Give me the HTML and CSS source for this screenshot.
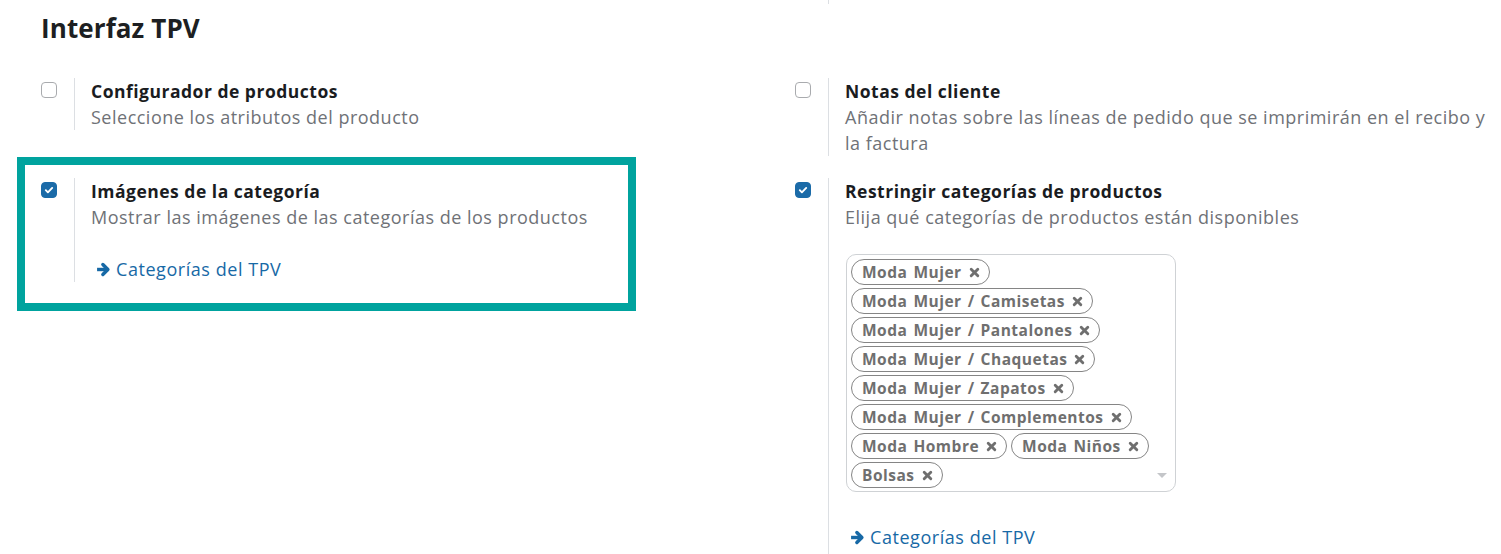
FILE: index.html
```html
<!DOCTYPE html>
<html lang="es">
<head>
<meta charset="utf-8">
<title>Interfaz TPV</title>
<link rel="stylesheet" href="styles.css">
</head>
<body>
<div class="page">
  <h2 class="heading">Interfaz TPV</h2>
  <div class="grid">
    <div class="setting">
      <div class="pane-left"><span class="cb"></span></div>
      <div class="pane-right">
        <div class="s-title">Configurador de productos</div>
        <div class="s-desc">Seleccione los atributos del producto</div>
      </div>
    </div>
    <div class="setting">
      <div class="pane-left"><span class="cb"></span></div>
      <div class="pane-right">
        <div class="s-title">Notas del cliente</div>
        <div class="s-desc">Añadir notas sobre las líneas de pedido que se imprimirán en el recibo y la factura</div>
      </div>
    </div>
    <div class="setting highlighted">
      <div class="pane-left"><span class="cb checked"><svg viewBox="0 0 16 16" width="16" height="16"><path d="M4.8 8.2l2.1 2.1 4.3-4.4" fill="none" stroke="#fff" stroke-width="1.9" stroke-linecap="round" stroke-linejoin="round"/></svg></span></div>
      <div class="pane-right">
        <div class="s-title">Imágenes de la categoría</div>
        <div class="s-desc">Mostrar las imágenes de las categorías de los productos</div>
        <a class="s-link link-a" href="#"><svg class="arrow" viewBox="0 0 14 14" width="15" height="15"><path d="M1 7H10.5" stroke="#1769a6" stroke-width="3.2" fill="none"/><path d="M6.4 2.3L11.1 7L6.4 11.7" stroke="#1769a6" stroke-width="3.2" fill="none" stroke-linecap="round" stroke-linejoin="round"/></svg>Categorías del TPV</a>
      </div>
    </div>
    <div class="setting tall">
      <div class="pane-left"><span class="cb checked"><svg viewBox="0 0 16 16" width="16" height="16"><path d="M4.8 8.2l2.1 2.1 4.3-4.4" fill="none" stroke="#fff" stroke-width="1.9" stroke-linecap="round" stroke-linejoin="round"/></svg></span></div>
      <div class="pane-right">
        <div class="s-title">Restringir categorías de productos</div>
        <div class="s-desc">Elija qué categorías de productos están disponibles</div>
        <div class="tagbox">
          <span class="tag">Moda Mujer<svg class="x" viewBox="0 0 10 10" width="11" height="11"><path d="M2 2L8 8M8 2L2 8" stroke="#6f6f6f" stroke-width="2.6" stroke-linecap="round"/></svg></span>
          <span class="tag">Moda Mujer / Camisetas<svg class="x" viewBox="0 0 10 10" width="11" height="11"><path d="M2 2L8 8M8 2L2 8" stroke="#6f6f6f" stroke-width="2.6" stroke-linecap="round"/></svg></span>
          <span class="tag">Moda Mujer / Pantalones<svg class="x" viewBox="0 0 10 10" width="11" height="11"><path d="M2 2L8 8M8 2L2 8" stroke="#6f6f6f" stroke-width="2.6" stroke-linecap="round"/></svg></span>
          <span class="tag">Moda Mujer / Chaquetas<svg class="x" viewBox="0 0 10 10" width="11" height="11"><path d="M2 2L8 8M8 2L2 8" stroke="#6f6f6f" stroke-width="2.6" stroke-linecap="round"/></svg></span>
          <span class="tag">Moda Mujer / Zapatos<svg class="x" viewBox="0 0 10 10" width="11" height="11"><path d="M2 2L8 8M8 2L2 8" stroke="#6f6f6f" stroke-width="2.6" stroke-linecap="round"/></svg></span>
          <span class="tag">Moda Mujer / Complementos<svg class="x" viewBox="0 0 10 10" width="11" height="11"><path d="M2 2L8 8M8 2L2 8" stroke="#6f6f6f" stroke-width="2.6" stroke-linecap="round"/></svg></span>
          <span class="tag">Moda Hombre<svg class="x" viewBox="0 0 10 10" width="11" height="11"><path d="M2 2L8 8M8 2L2 8" stroke="#6f6f6f" stroke-width="2.6" stroke-linecap="round"/></svg></span><span class="tag">Moda Niños<svg class="x" viewBox="0 0 10 10" width="11" height="11"><path d="M2 2L8 8M8 2L2 8" stroke="#6f6f6f" stroke-width="2.6" stroke-linecap="round"/></svg></span>
          <span class="tag">Bolsas<svg class="x" viewBox="0 0 10 10" width="11" height="11"><path d="M2 2L8 8M8 2L2 8" stroke="#6f6f6f" stroke-width="2.6" stroke-linecap="round"/></svg></span>
          <span class="caret"></span>
        </div>
        <a class="s-link link-b" href="#"><svg class="arrow" viewBox="0 0 14 14" width="15" height="15"><path d="M1 7H10.5" stroke="#1769a6" stroke-width="3.2" fill="none"/><path d="M6.4 2.3L11.1 7L6.4 11.7" stroke="#1769a6" stroke-width="3.2" fill="none" stroke-linecap="round" stroke-linejoin="round"/></svg>Categorías del TPV</a>
      </div>
    </div>
  </div>
</div>
</body>
</html>
```

FILE: styles.css
```css
html, body {
  margin: 0;
  padding: 0;
  background: #ffffff;
  overflow: hidden;
}
body {
  font-family: "Open Sans", "Noto Sans", sans-serif;
  color: #1f2328;
  height: 554px;
}
.page {
  position: relative;
  padding-left: 41px;
}
.page::before {
  content: "";
  position: absolute;
  left: 828px;
  top: 0;
  width: 1px;
  height: 4px;
  background: #dcdfe3;
}
.heading {
  margin: 0;
  padding-top: 10px;
  height: 77px;
  box-sizing: border-box;
  font-size: 26px;
  line-height: 36px;
  font-weight: 700;
  color: #1d1f22;
  letter-spacing: 0.1px;
}
.grid {
  display: grid;
  grid-template-columns: 754px 1fr;
  row-gap: 22px;
  align-items: start;
  padding-top: 1px;
}
.setting {
  display: flex;
  position: relative;
}
.setting.highlighted::before {
  content: "";
  position: absolute;
  left: -24px;
  top: -21px;
  width: 619px;
  height: 154px;
  box-sizing: border-box;
  border: 8px solid #00a39e;
  pointer-events: none;
}
.pane-left {
  width: 33px;
  flex: none;
  padding-top: 4px;
}
.pane-right {
  border-left: 1px solid #dcdfe3;
  padding-left: 16px;
  padding-right: 10px;
  flex: 1;
  min-width: 0;
}
.setting.tall .pane-right {
  min-height: 380px;
}
.cb {
  display: block;
  width: 16px;
  height: 16px;
  box-sizing: border-box;
  border: 1px solid #a9abae;
  border-radius: 4px;
  background: #fff;
}
.cb.checked {
  background: #1b6ba8;
  border-color: #1b6ba8;
  position: relative;
}
.cb.checked svg {
  position: absolute;
  left: -1px;
  top: -1px;
}
.s-title {
  font-size: 17.5px;
  line-height: 26px;
  font-weight: 700;
  letter-spacing: 0.5px;
  color: #1a1c1f;
}
.s-desc {
  font-size: 18px;
  line-height: 26px;
  letter-spacing: 0.5px;
  color: #6f7277;
}
.s-link {
  display: flex;
  align-items: center;
  gap: 5px;
  padding-left: 5px;
  font-size: 18px;
  line-height: 26px;
  letter-spacing: 0.55px;
  color: #1769a6;
  text-decoration: none;
}
.link-a {
  margin-top: 26px;
}
.link-b {
  margin-top: 32px;
}
.arrow {
  flex: none;
}
.tagbox {
  position: relative;
  margin-top: 24px;
  margin-left: 1px;
  width: 330px;
  box-sizing: border-box;
  border: 1px solid #cfd2d5;
  border-radius: 10px;
  padding: 4px 4px 0 4px;
  font-size: 0;
}
.tag {
  display: inline-flex;
  align-items: center;
  height: 26px;
  box-sizing: border-box;
  border: 1px solid #858585;
  border-radius: 13px;
  padding: 0 9px 0 10px;
  margin: 0 4px 3px 0;
  font-size: 15.5px;
  font-weight: 700;
  letter-spacing: 0.5px;
  word-spacing: 1.5px;
  color: #6f6f6f;
  vertical-align: top;
}
.tag .x {
  margin-left: 7px;
}
.caret {
  position: absolute;
  right: 8px;
  bottom: 13px;
  width: 0;
  height: 0;
  border-left: 5px solid transparent;
  border-right: 5px solid transparent;
  border-top: 5px solid #c4c6c9;
}
```
